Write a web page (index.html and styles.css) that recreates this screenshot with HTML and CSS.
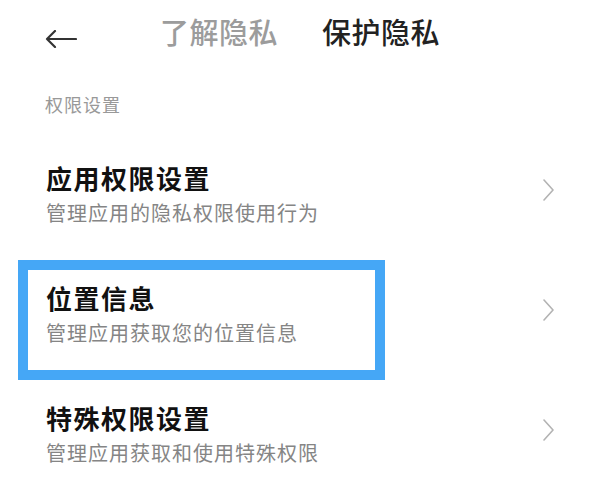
FILE: index.html
```html
<!DOCTYPE html>
<html lang="zh-CN">
<head>
    <meta charset="UTF-8">
    <meta name="viewport" content="width=device-width, initial-scale=1.0">
    <title>保护隐私</title>
    <link rel="stylesheet" href="styles.css">
</head>
<body>
    <div class="header">
        <svg class="back" width="32" height="18" viewBox="0 0 32 18">
            <path d="M31 9H2M10 1L2 9l8 8" fill="none" stroke="#333" stroke-width="2.2" stroke-linecap="round" stroke-linejoin="round"/>
        </svg>
        <div class="tabs">
            <span class="tab">了解隐私</span>
            <span class="tab active">保护隐私</span>
        </div>
    </div>

    <div class="section">权限设置</div>

    <ul class="list">
        <li class="item">
            <div class="text">
                <div class="title">应用权限设置</div>
                <div class="desc">管理应用的隐私权限使用行为</div>
            </div>
            <svg class="arrow" width="13" height="22" viewBox="0 0 13 22">
                <path d="M2 1l9 10-9 10" fill="none" stroke="#b3b3b3" stroke-width="1.6" stroke-linecap="round" stroke-linejoin="round"/>
            </svg>
        </li>
        <li class="item selected">
            <div class="highlight"></div>
            <div class="text">
                <div class="title">位置信息</div>
                <div class="desc">管理应用获取您的位置信息</div>
            </div>
            <svg class="arrow" width="13" height="22" viewBox="0 0 13 22">
                <path d="M2 1l9 10-9 10" fill="none" stroke="#b3b3b3" stroke-width="1.6" stroke-linecap="round" stroke-linejoin="round"/>
            </svg>
        </li>
        <li class="item">
            <div class="text">
                <div class="title">特殊权限设置</div>
                <div class="desc">管理应用获取和使用特殊权限</div>
            </div>
            <svg class="arrow" width="13" height="22" viewBox="0 0 13 22">
                <path d="M2 1l9 10-9 10" fill="none" stroke="#b3b3b3" stroke-width="1.6" stroke-linecap="round" stroke-linejoin="round"/>
            </svg>
        </li>
    </ul>
</body>
</html>
```

FILE: styles.css
```css
/* Basic page */
body {
    margin: 0;
    padding: 0;
    background-color: #fff;
    font-family: "Noto Sans CJK SC", "Noto Sans", sans-serif;
    color: #111;
}

/* Top bar with back arrow and tabs */
.header {
    display: flex;
    align-items: center;
    height: 62px;
    padding-left: 45px;
}

.back {
    margin-top: 16px;
    flex-shrink: 0;
}

.tabs {
    display: flex;
    gap: 44px;
    margin-left: 83px;
}

.tab {
    font-size: 29px;
    line-height: 36px;
    font-weight: 500;
    color: #9c9c9c;
    letter-spacing: 0.5px;
}

.tab.active {
    color: #222;
}

.section {
    font-size: 18px;
    line-height: 24px;
    color: #999;
    margin: 30px 0 24px 45px;
    letter-spacing: 1px;
}

/* List of settings */
.list {
    list-style: none;
    margin: 0;
    padding: 0;
}

.item {
    position: relative;
    display: flex;
    align-items: center;
    justify-content: space-between;
    height: 120px;
    box-sizing: border-box;
    padding: 20px 45px 30px 46px;
}

.title {
    font-size: 26px;
    line-height: 36px;
    font-weight: 700;
    color: #111;
    letter-spacing: 1.5px;
}

.desc {
    font-size: 20px;
    line-height: 34px;
    color: #858585;
    letter-spacing: 1px;
}

.arrow {
    margin-bottom: 10px;
}

/* annotation box over the selected row */
.highlight {
    position: absolute;
    left: 18px;
    top: 0;
    width: 367px;
    height: 120px;
    box-sizing: border-box;
    border: 10px solid #45a7f6;
    pointer-events: none;
}
```
